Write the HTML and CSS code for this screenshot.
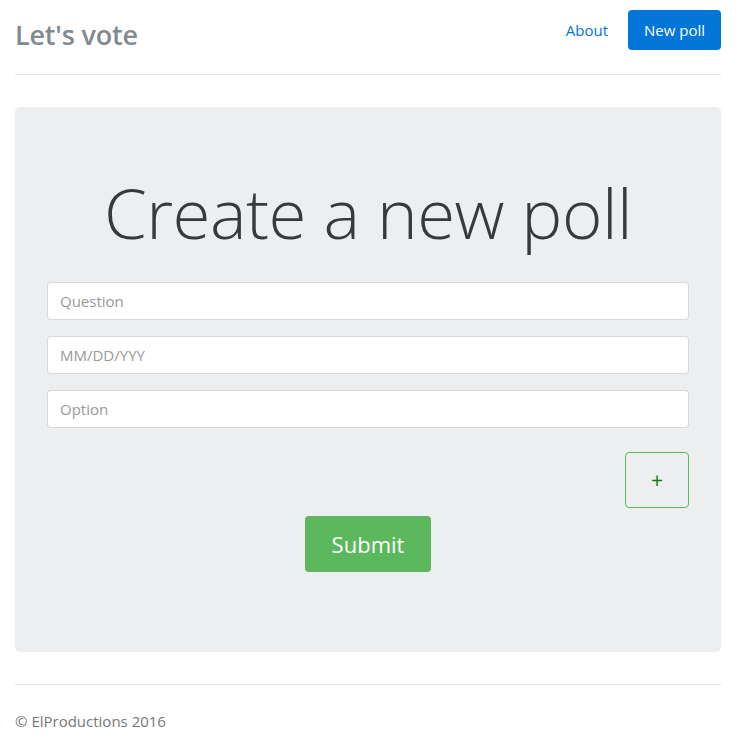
FILE: index.html
```html
<!DOCTYPE html>
<html lang="en">
<head>
<meta charset="utf-8">
<title>Let's vote</title>
<link rel="stylesheet" href="styles.css">
</head>
<body>
<div class="page">
  <header class="header">
    <h3 class="brand">Let's vote</h3>
    <nav class="nav">
      <a class="nav-link" href="#">About</a>
      <a class="btn-primary" href="#">New poll</a>
    </nav>
  </header>
  <main class="jumbotron">
    <h1 class="display">Create a new poll</h1>
    <form class="poll-form">
      <input class="field" type="text" placeholder="Question">
      <input class="field" type="text" placeholder="MM/DD/YYY">
      <input class="field" type="text" placeholder="Option">
      <div class="add-row">
        <button class="btn-add" type="button">+</button>
      </div>
      <div class="submit-row">
        <button class="btn-submit" type="submit">Submit</button>
      </div>
    </form>
  </main>
  <footer class="footer">
    <p class="copy">© ElProductions 2016</p>
  </footer>
</div>
</body>
</html>
```
FILE: styles.css
```css
* { box-sizing: border-box; }
html, body { margin: 0; padding: 0; background: #fff; }
body {
  font-family: "Open Sans", "Noto Sans", "Liberation Sans", sans-serif;
  font-size: 16px;
  color: #373a3c;
}
.page {
  padding: 0 20px 0 15px;
}
.header {
  display: flex;
  justify-content: space-between;
  align-items: flex-start;
  padding-top: 10px;
  padding-bottom: 19px;
  border-bottom: 1px solid #e5e5e5;
}
.brand {
  margin: 0;
  padding-top: 5px;
  font-size: 27px;
  font-weight: 600;
  color: #818a91;
  line-height: 40px;
  letter-spacing: -0.2px;
}
.nav {
  display: flex;
  align-items: center;
  gap: 19px;
}
.nav-link {
  color: #0275d8;
  text-decoration: none;
  font-size: 15px;
  margin-right: 1px;
}
.btn-primary {
  display: block;
  background: #0275d8;
  color: #fff;
  text-decoration: none;
  font-size: 15px;
  line-height: 40px;
  height: 40px;
  padding: 0 16px;
  border-radius: 4px;
}
.jumbotron {
  margin-top: 32px;
  background: #eceeef;
  border-radius: 5px;
  padding: 64px 32px 64px;
}
.display {
  margin: 0 0 31px;
  text-align: center;
  font-size: 69px;
  font-weight: 300;
  line-height: 82px;
  color: #373a3c;
  letter-spacing: -0.5px;
}
.poll-form {
  display: flex;
  flex-direction: column;
  margin-top: -2px;
}
.field {
  display: block;
  width: 100%;
  height: 38px;
  margin: 0 0 16px;
  padding: 0 12px;
  border: 1px solid rgba(0,0,0,.15);
  border-radius: 4px;
  background: #fff;
  font-family: inherit;
  font-size: 15px;
  color: #55595c;
}
.field::placeholder { color: #999; }
.add-row {
  display: flex;
  justify-content: flex-end;
  margin-top: 8px;
}
.btn-add {
  width: 64px;
  height: 56px;
  border: 1px solid #5cb85c;
  border-radius: 4px;
  background: transparent;
  color: #137a13;
  font-family: inherit;
  font-size: 21px;
  padding: 0;
}
.submit-row {
  display: flex;
  justify-content: center;
  margin-top: 8px;
  margin-bottom: 16px;
}
.btn-submit {
  width: 126px;
  height: 56px;
  border: none;
  border-radius: 4px;
  background: #5cb85c;
  color: #fff;
  font-family: inherit;
  font-size: 22px;
  padding: 0;
}
.footer {
  margin-top: 32px;
  border-top: 1px solid #e5e5e5;
  padding-top: 24px;
}
.copy {
  margin: 0;
  font-size: 15px;
  color: #777;
  line-height: 24px;
}
```
